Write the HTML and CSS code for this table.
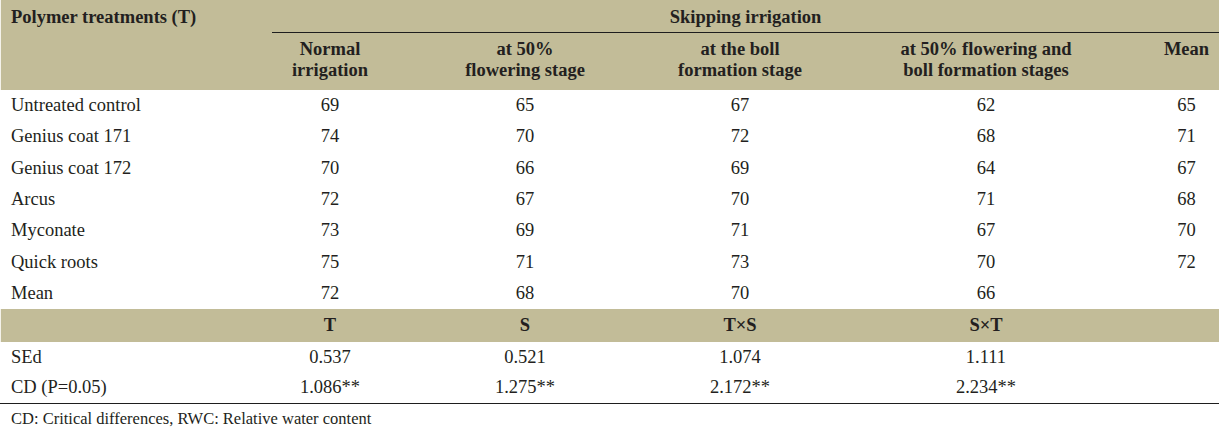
FILE: index.html
```html
<!DOCTYPE html>
<html lang="en">
<head>
<meta charset="utf-8">
<title>Polymer treatments table</title>
<link rel="stylesheet" href="styles.css">
</head>
<body>
<table class="data">
  <colgroup>
    <col class="c-stub">
    <col class="c-normal">
    <col class="c-flower">
    <col class="c-boll">
    <col class="c-both">
    <col class="c-mean">
  </colgroup>
  <thead>
    <tr class="head-top">
      <th rowspan="2" class="stub">Polymer treatments (T)</th>
      <th colspan="5" class="group">Skipping irrigation</th>
    </tr>
    <tr class="head-sub">
      <th>Normal<br>irrigation</th>
      <th>at 50%<br>flowering stage</th>
      <th>at the boll<br>formation stage</th>
      <th>at 50% flowering and<br>boll formation stages</th>
      <th>Mean</th>
    </tr>
  </thead>
  <tbody class="values">
    <tr><td>Untreated control</td><td>69</td><td>65</td><td>67</td><td>62</td><td>65</td></tr>
    <tr><td>Genius coat 171</td><td>74</td><td>70</td><td>72</td><td>68</td><td>71</td></tr>
    <tr><td>Genius coat 172</td><td>70</td><td>66</td><td>69</td><td>64</td><td>67</td></tr>
    <tr><td>Arcus</td><td>72</td><td>67</td><td>70</td><td>71</td><td>68</td></tr>
    <tr><td>Myconate</td><td>73</td><td>69</td><td>71</td><td>67</td><td>70</td></tr>
    <tr><td>Quick roots</td><td>75</td><td>71</td><td>73</td><td>70</td><td>72</td></tr>
    <tr><td>Mean</td><td>72</td><td>68</td><td>70</td><td>66</td><td></td></tr>
  </tbody>
  <tbody class="stats">
    <tr class="band"><td></td><th>T</th><th>S</th><th>T×S</th><th>S×T</th><td></td></tr>
    <tr><td>SEd</td><td>0.537</td><td>0.521</td><td>1.074</td><td>1.111</td><td></td></tr>
    <tr class="last"><td>CD (P=0.05)</td><td>1.086**</td><td>1.275**</td><td>2.172**</td><td>2.234**</td><td></td></tr>
  </tbody>
</table>
<p class="note">CD: Critical differences, RWC: Relative water content</p>
</body>
</html>
```
FILE: styles.css
```css
html, body {
  margin: 0;
  padding: 0;
  background: #ffffff;
}

body {
  font-family: "Liberation Serif", "Times New Roman", serif;
  color: #231f20;
}

.data {
  width: 1219px;
  border-collapse: collapse;
  table-layout: fixed;
  font-size: 18.5px;
  line-height: 21px;
}

.c-stub { width: 272px; }
.c-normal { width: 116px; }
.c-flower { width: 274px; }
.c-boll { width: 156px; }
.c-both { width: 336px; }
.c-mean { width: 65px; }

.data th,
.data td {
  padding: 0 4px;
  text-align: center;
  font-weight: normal;
}

.data thead th {
  background: #c2bc98;
  font-weight: bold;
  vertical-align: top;
}

.head-top th {
  padding-top: 7px;
  padding-bottom: 4px;
}

.data th.stub {
  text-align: left;
  padding-left: 11px;
  box-shadow: inset 1px 0 #f4f2ea;
}

.data th.group {
  border-bottom: 1px solid #1e1e1e;
}

.head-sub th {
  padding-top: 6px;
  padding-bottom: 9px;
}

.values tr {
  height: 31.3px;
}

.data td {
  vertical-align: middle;
}

.data td:first-child {
  text-align: left;
  padding-left: 11px;
}

.stats tr {
  height: 30.5px;
}

.stats tr.band {
  height: 33px;
}

.stats tr.band td,
.stats tr.band th {
  background: #c2bc98;
  font-weight: bold;
}

.stats tr.band td:first-child {
  box-shadow: inset 1px 0 #f4f2ea;
}

.stats tr.last td {
  border-bottom: 1px solid #1e1e1e;
}

.note {
  margin: 0;
  padding: 4px 0 0 11px;
  font-size: 16.5px;
  line-height: 21px;
}
```
